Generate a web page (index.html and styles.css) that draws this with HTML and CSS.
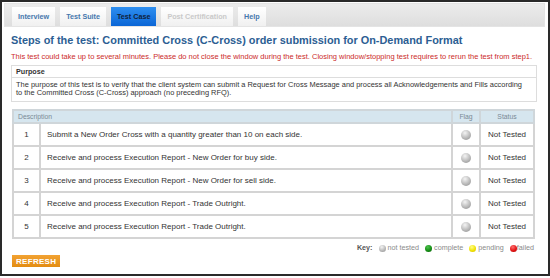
FILE: index.html
```html
<!DOCTYPE html>
<html>
<head>
  <title>Steps of the test</title>
  <link rel="stylesheet" href="styles.css">
</head>
<body>
  <div class="frame">
    <div class="tabbar">
      <a class="tab">Interview</a>
      <a class="tab">Test Suite</a>
      <a class="tab active">Test Case</a>
      <a class="tab disabled">Post Certification</a>
      <a class="tab">Help</a>
    </div>

    <div class="content">
      <h1>Steps of the test: Committed Cross (C-Cross) order submission for On-Demand Format</h1>
      <p class="warning">This test could take up to several minutes. Please do not close the window during the test. Closing window/stopping test requires to rerun the test from step1.</p>

      <div class="purpose">
        <div class="purpose-head">Purpose</div>
        <div class="purpose-body">The purpose of this test is to verify that the client system can submit a Request for Cross Message and process all Acknowledgements and Fills according to the Committed Cross (C-Cross) approach (no preceding RFQ).</div>
      </div>

      <table class="steps">
        <tr>
          <th colspan="2" class="desc-head">Description</th>
          <th class="flag-col">Flag</th>
          <th class="status-col">Status</th>
        </tr>
        <tr>
          <td class="num">1</td>
          <td>Submit a New Order Cross with a quantity greater than 10 on each side.</td>
          <td class="flag"><span class="ball grey"></span></td>
          <td class="status">Not Tested</td>
        </tr>
        <tr>
          <td class="num">2</td>
          <td>Receive and process Execution Report - New Order for buy side.</td>
          <td class="flag"><span class="ball grey"></span></td>
          <td class="status">Not Tested</td>
        </tr>
        <tr>
          <td class="num">3</td>
          <td>Receive and process Execution Report - New Order for sell side.</td>
          <td class="flag"><span class="ball grey"></span></td>
          <td class="status">Not Tested</td>
        </tr>
        <tr>
          <td class="num">4</td>
          <td>Receive and process Execution Report - Trade Outright.</td>
          <td class="flag"><span class="ball grey"></span></td>
          <td class="status">Not Tested</td>
        </tr>
        <tr>
          <td class="num">5</td>
          <td>Receive and process Execution Report - Trade Outright.</td>
          <td class="flag"><span class="ball grey"></span></td>
          <td class="status">Not Tested</td>
        </tr>
      </table>

      <div class="key">
        <b>Key:</b>
        <span class="ball small grey"></span> not tested
        <span class="ball small green"></span> complete
        <span class="ball small yellow"></span> pending
        <span class="ball small red"></span>failed
      </div>

      <button class="refresh">REFRESH</button>
    </div>
  </div>
</body>
</html>
```

FILE: styles.css
```css
body {
  margin: 0;
  background-color: #ffffff;
  font-family: "Liberation Sans", Arial, sans-serif;
  color: #333333;
}
.frame {
  width: 550px;
  height: 276px;
  box-sizing: border-box;
  border: 2px solid #2a2a2a;
  padding: 1px 3px 0 2px;
}
.tabbar {
  height: 22px;
  display: flex;
  align-items: flex-end;
  gap: 5px;
  padding-left: 7px;
  background: linear-gradient(#ececec, #dedede);
  border: 1px solid #e4e4e4;
}
.tab {
  height: 19px;
  line-height: 19px;
  padding: 0 6px;
  font-size: 7.2px;
  font-weight: bold;
  color: #4677ad;
  background: linear-gradient(#ffffff, #f0f0f0);
}
.tab.active {
  background: linear-gradient(#2e8ff0, #0b66d6);
  color: #10223a;
}
.tab.disabled {
  color: #c9c9c9;
}
.content {
  padding: 0 8px 0 7px;
}
h1 {
  margin: 7px 0 0 0;
  font-size: 10.9px;
  color: #2c5e93;
}
.warning {
  margin: 6px 0 0 0;
  font-size: 7.5px;
  color: #cc2b2b;
}
.purpose {
  margin-top: 4px;
  border: 1px solid #dddddd;
  font-size: 7.45px;
}
.purpose-head {
  font-weight: bold;
  font-size: 7.2px;
  height: 11px;
  line-height: 11px;
  padding: 0 4px;
  border-bottom: 1px solid #dddddd;
}
.purpose-body {
  padding: 3px 12px 4px 4px;
  line-height: 8px;
}
.steps {
  margin-top: 7px;
  width: 523px;
  margin-left: 1px;
  border-collapse: collapse;
  border: 2px solid #d4d4d4;
  font-size: 8px;
}
.steps th {
  background-color: #d6e6ef;
  color: #7a8a96;
  font-weight: normal;
  font-size: 6.8px;
  height: 9px;
  padding: 1px 4px;
  border: 2px solid #cfd6da;
}
.steps th.desc-head {
  text-align: left;
}
.steps td {
  height: 21px;
  padding: 0 6px;
  border: 2px solid #d4d4d4;
}
.steps td.num {
  width: 13px;
  text-align: center;
}
.flag-col {
  width: 18px;
}
.status-col {
  width: 44px;
}
.steps td.flag {
  text-align: center;
  padding: 0;
}
.steps td.status {
  text-align: center;
  padding: 0 2px;
}
.ball {
  display: inline-block;
  width: 10px;
  height: 10px;
  border-radius: 50%;
  vertical-align: middle;
}
.ball.grey {
  background: radial-gradient(circle at 40% 30%, #f4f4f4, #b5b5b5 60%, #8a8a8a);
}
.ball.green {
  background: radial-gradient(circle at 40% 30%, #4cc24c, #138a13 60%, #0a5a0a);
}
.ball.yellow {
  background: radial-gradient(circle at 40% 30%, #ffff88, #f0e000 60%, #c8b800);
}
.ball.red {
  background: radial-gradient(circle at 40% 30%, #ff7070, #e01010 60%, #a00000);
}
.ball.small {
  width: 7px;
  height: 7px;
  margin-left: 4px;
}
.key {
  margin-top: 4px;
  text-align: right;
  font-size: 7.2px;
  color: #8a8a8a;
  padding-right: 3px;
}
.key b {
  color: #555555;
}
.refresh {
  display: block;
  margin: 3px 0 0 1px;
  padding: 0 4px;
  height: 12px;
  border: none;
  background: linear-gradient(#f2a232, #e38c12);
  color: #ffffff;
  font-family: "Liberation Sans", Arial, sans-serif;
  font-size: 8px;
  font-weight: bold;
  letter-spacing: 0.3px;
}
```
